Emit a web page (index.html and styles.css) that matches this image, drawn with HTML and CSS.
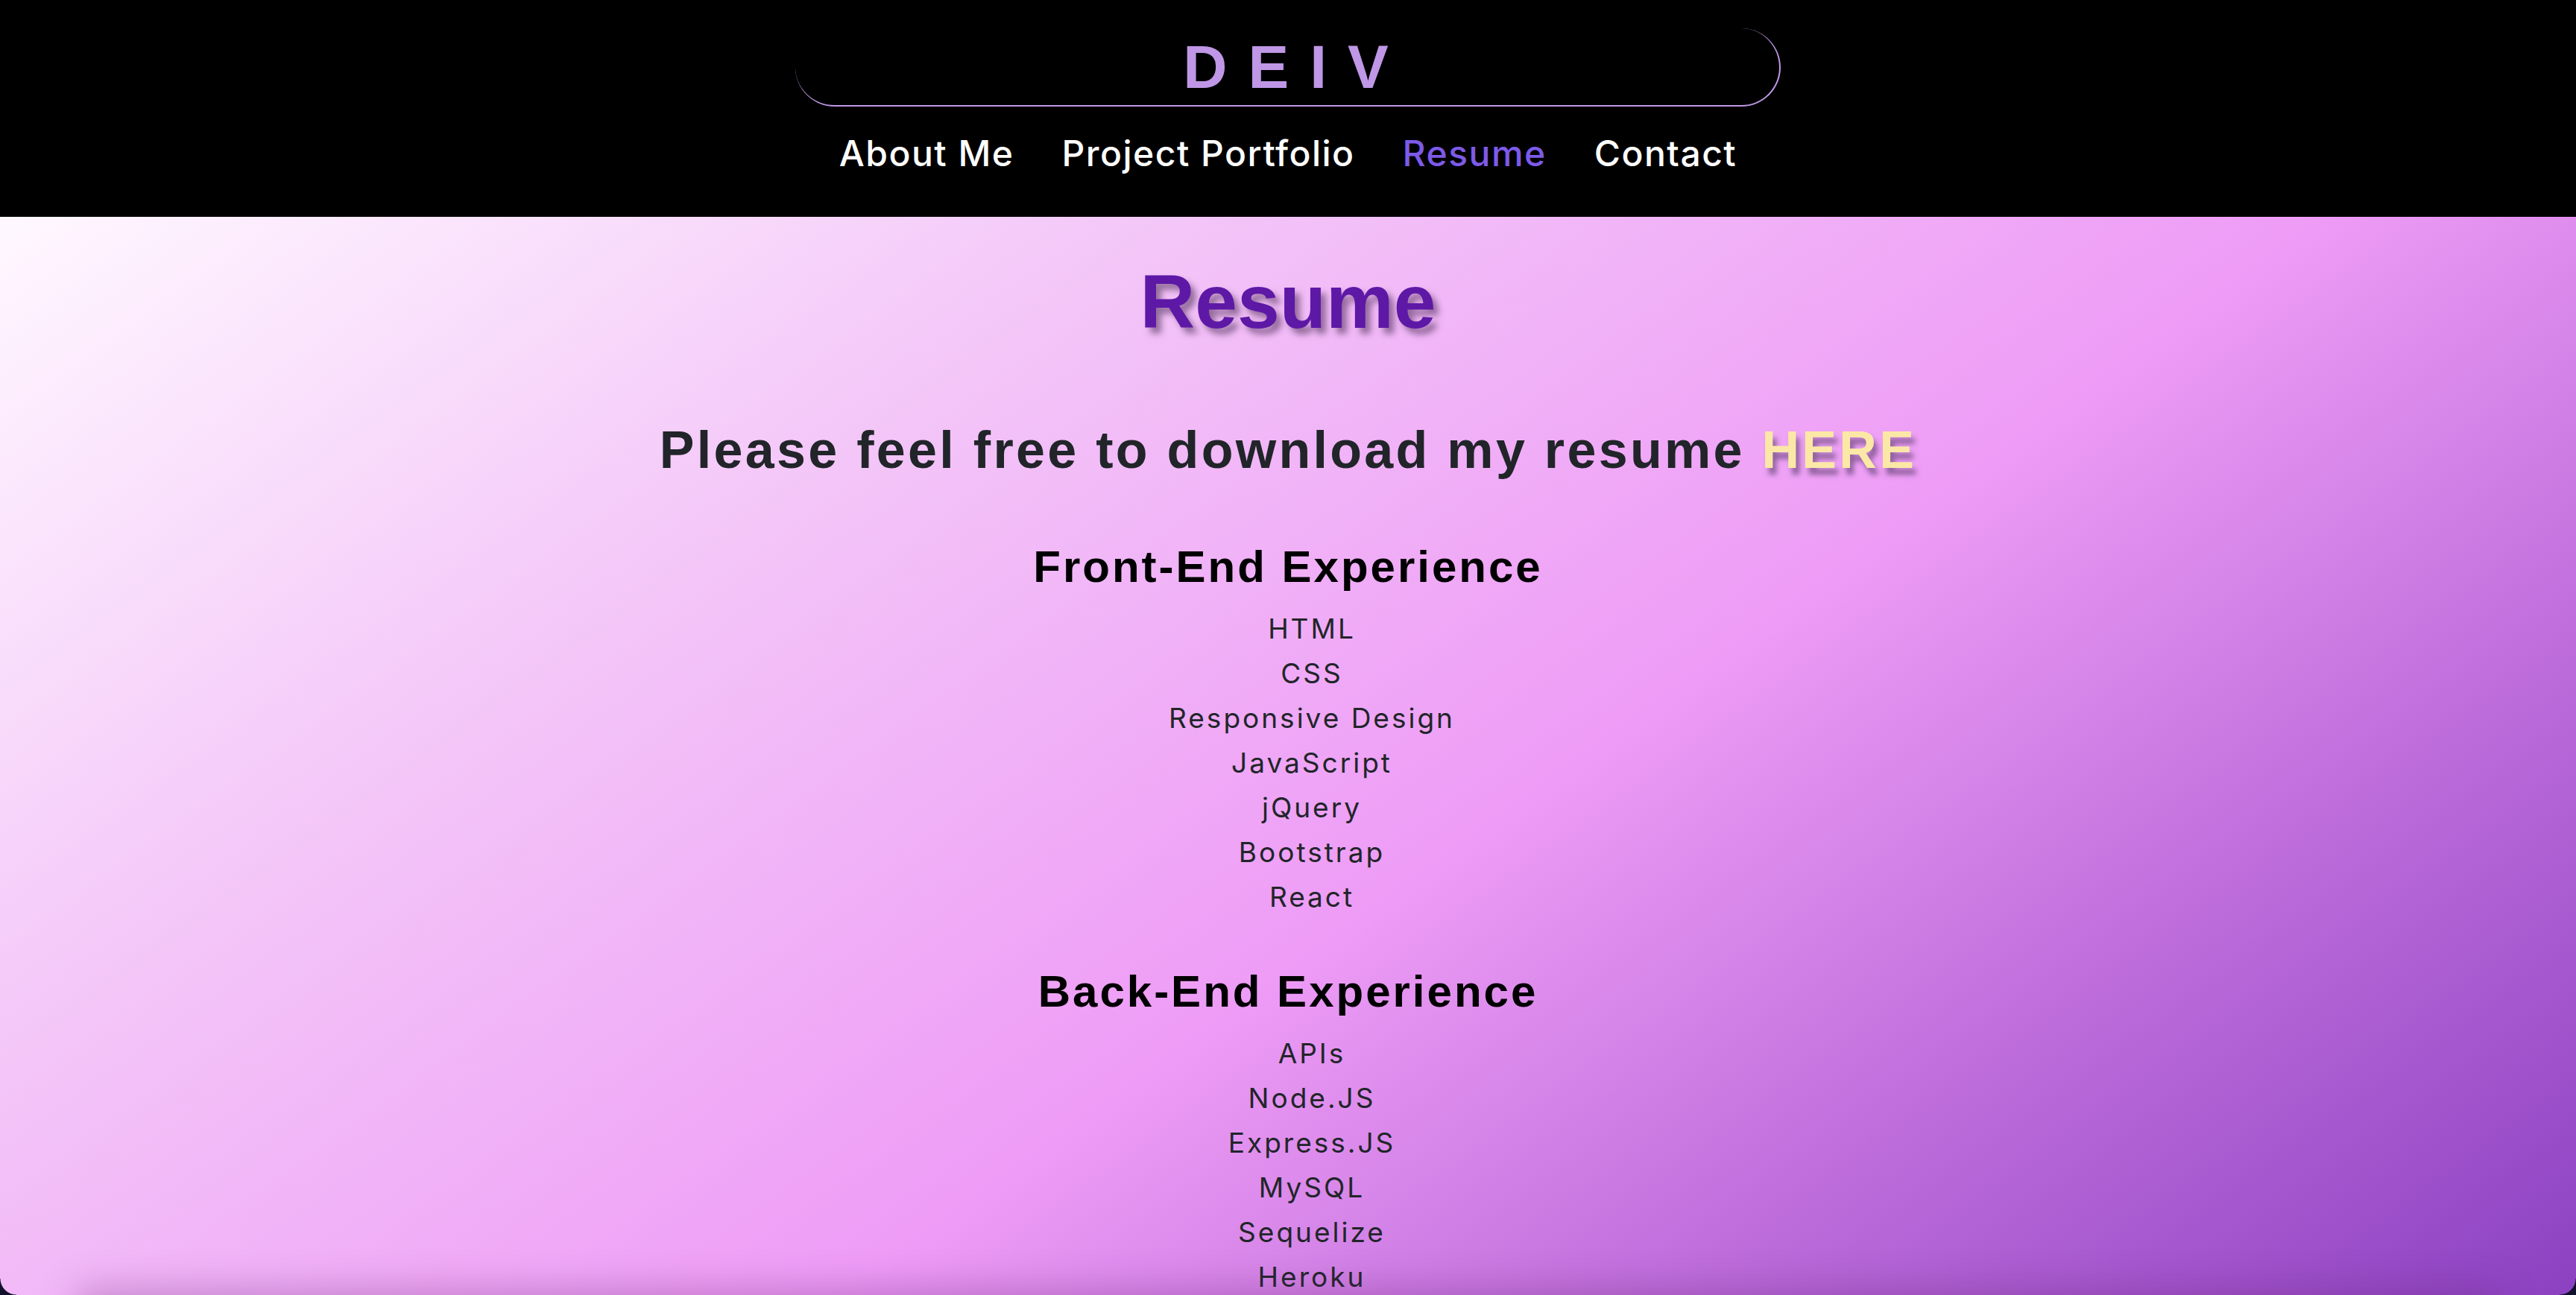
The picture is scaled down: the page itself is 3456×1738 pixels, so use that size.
FILE: index.html
```html
<!DOCTYPE html>
<html lang="en">
<head>
<meta charset="utf-8">
<title>Resume | DEIV</title>
<link rel="stylesheet" href="styles.css">
</head>
<body>
<header class="site-header">
  <div class="brand"><span class="brand-text">DEIV</span></div>
  <nav class="nav">
    <a class="nav-link" href="#">About Me</a>
    <a class="nav-link" href="#">Project Portfolio</a>
    <a class="nav-link active" href="#">Resume</a>
    <a class="nav-link" href="#">Contact</a>
  </nav>
</header>
<main class="content">
  <h1 class="page-title">Resume</h1>
  <h2 class="download">Please feel free to download my resume <a class="here" href="#">HERE</a></h2>
  <section class="skills">
    <h3 class="skills-title">Front-End Experience</h3>
    <ul class="skill-list">
      <li>HTML</li>
      <li>CSS</li>
      <li>Responsive Design</li>
      <li>JavaScript</li>
      <li>jQuery</li>
      <li>Bootstrap</li>
      <li>React</li>
    </ul>
  </section>
  <section class="skills">
    <h3 class="skills-title">Back-End Experience</h3>
    <ul class="skill-list">
      <li>APIs</li>
      <li>Node.JS</li>
      <li>Express.JS</li>
      <li>MySQL</li>
      <li>Sequelize</li>
      <li>Heroku</li>
    </ul>
  </section>
</main>
<div class="bottom-shadow"></div>
<div class="corner corner-left"></div>
<div class="corner corner-right"></div>
</body>
</html>
```

FILE: styles.css
```css
* { box-sizing: border-box; }

html, body {
  margin: 0;
  padding: 0;
  height: 100%;
  overflow: hidden;
  background: #000;
}

body {
  font-family: Inter, "Noto Sans", sans-serif;
  color: #212529;
}

.site-header {
  background: #000;
  height: 291px;
  padding-top: 38px;
  display: flex;
  flex-direction: column;
  align-items: center;
}

.brand {
  width: 1322px;
  height: 105px;
  border-style: solid;
  border-color: #bf97e6;
  border-width: 0 2px 2px 0;
  border-radius: 60px;
  display: flex;
  align-items: center;
  justify-content: center;
}

.brand-text {
  font-family: "Liberation Sans", Arial, sans-serif;
  font-weight: 700;
  font-size: 82px;
  line-height: 1;
  letter-spacing: 28px;
  padding-left: 24px;
  color: #bf97e6;
}

.nav {
  margin-top: 33px;
  display: flex;
  gap: 64px;
}

.nav-link {
  font-family: Inter, "Noto Sans", sans-serif;
  font-size: 48px;
  font-weight: 500;
  letter-spacing: 1.5px;
  color: #fff;
  text-decoration: none;
}

.nav-link.active { color: #7d5ae8; }

.content {
  height: calc(100vh - 291px);
  overflow: hidden;
  padding-top: 53px;
  text-align: center;
  background: linear-gradient(144deg, #fff8ff 0%, #f3c4f8 30%, #ee9cf6 57%, #b868d8 80%, #8b41c1 100%);
}

.page-title {
  margin: 0 0 96px;
  font-family: "Liberation Sans", Arial, sans-serif;
  font-weight: 700;
  font-size: 102px;
  line-height: 1.2;
  color: #5e18a6;
  text-shadow: 7px 8px 8px rgba(70, 40, 80, 0.55);
}

.download {
  margin: 0 0 79px;
  font-family: "Liberation Sans", Arial, sans-serif;
  font-weight: 700;
  font-size: 70px;
  line-height: 1.2;
  letter-spacing: 3.3px;
  color: #212529;
}

.here {
  color: #fce8a6;
  text-decoration: none;
  text-shadow: 5px 9px 7px rgba(60, 40, 80, 0.55);
}

.skills-title {
  margin: 0 0 17px;
  font-family: "Liberation Sans", Arial, sans-serif;
  font-weight: 700;
  font-size: 60px;
  line-height: 1.2;
  letter-spacing: 3px;
  color: #000;
}

.skill-list {
  list-style: none;
  margin: 0 0 61px;
  padding-left: 64px;
  font-size: 37px;
  line-height: 60px;
  letter-spacing: 3px;
  color: #212529;
}

.bottom-shadow {
  position: fixed;
  left: 110px;
  right: 110px;
  bottom: -60px;
  height: 60px;
  box-shadow: 0 0 50px 6px rgba(110, 40, 120, 0.35);
}

.corner {
  position: fixed;
  bottom: 0;
  width: 22px;
  height: 22px;
}

.corner-left {
  left: 0;
  background: radial-gradient(circle at 22px 0, transparent 21px, #12122e 22px);
}

.corner-right {
  right: 0;
  background: radial-gradient(circle at 0 0, transparent 21px, #12122e 22px);
}
```
